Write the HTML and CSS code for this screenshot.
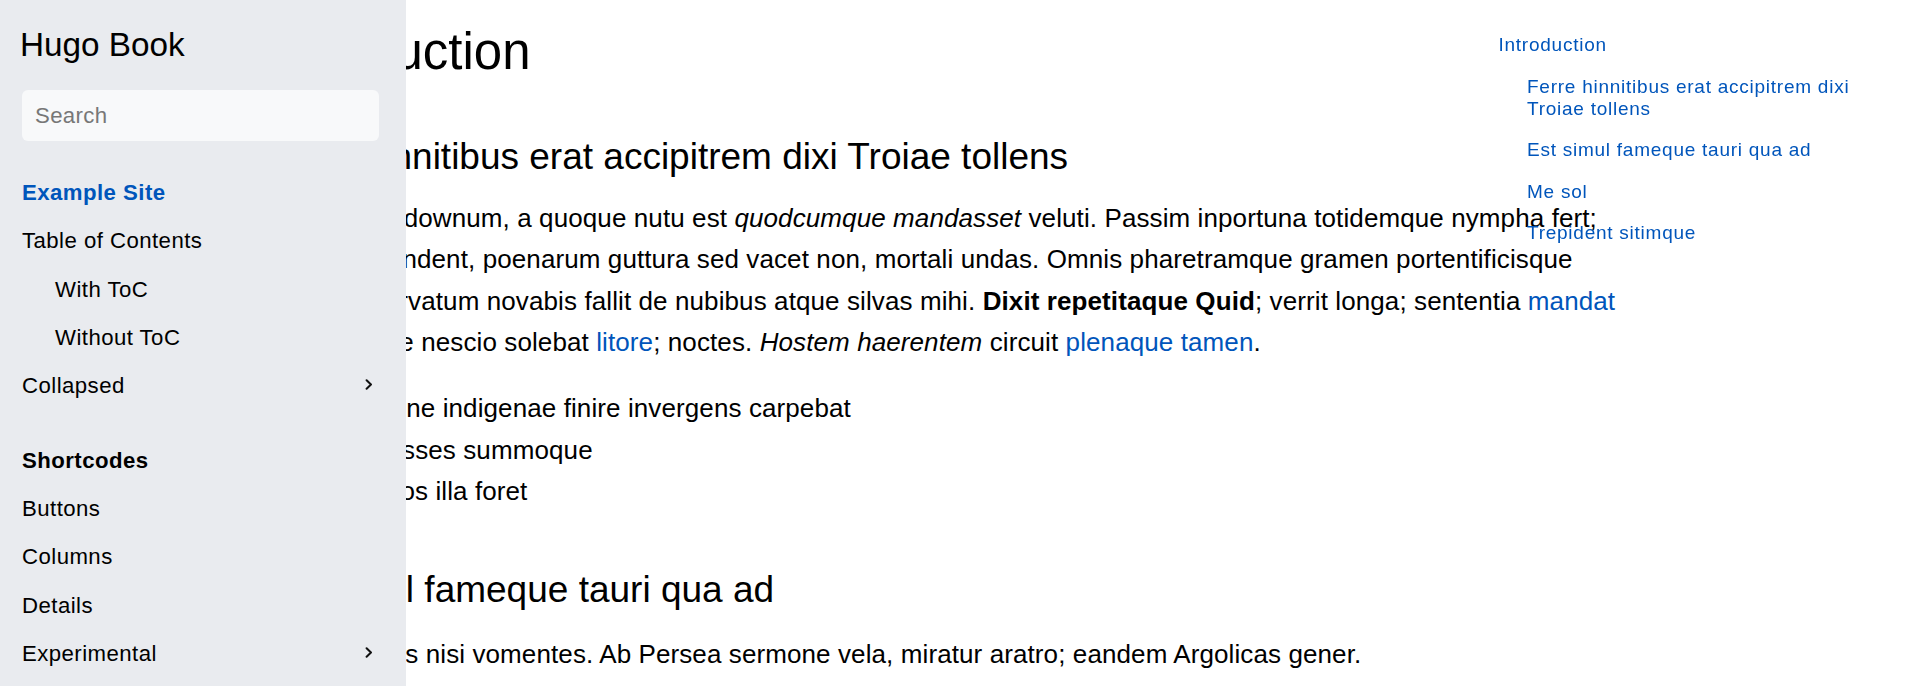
FILE: index.html
```html
<!DOCTYPE html>
<html lang="en">
<head>
<meta charset="utf-8">
<title>Introduction | Hugo Book</title>
<link rel="stylesheet" href="styles.css">
</head>
<body>
<main class="page">
  <article class="doc">
    <h1>Introduction</h1>
    <h2>Ferre hinnitibus erat accipitrem dixi Troiae tollens</h2>
    <p>Lorem markdownum, a quoque nutu est <em>quodcumque mandasset</em> veluti. Passim inportuna totidemque nympha fert; repetens pendent, poenarum guttura sed vacet non, mortali undas. Omnis pharetramque gramen portentificisque membris servatum novabis fallit de nubibus atque silvas mihi. <strong>Dixit repetitaque Quid</strong>; verrit longa; sententia <a href="#">mandat</a> quascumque nescio solebat <a href="#">litore</a>; noctes. <em>Hostem haerentem</em> circuit <a href="#">plenaque tamen</a>.</p>
    <ul>
      <li>Pedum ne indigenae finire invergens carpebat</li>
      <li>Velit posses summoque</li>
      <li>De fumos illa foret</li>
    </ul>
    <h2>Est simul fameque tauri qua ad</h2>
    <p>Locum nullus nisi vomentes. Ab Persea sermone vela, miratur aratro; eandem Argolicas gener.</p>
    <h2>Me sol</h2>
    <p>Nec dis certa fuit socer, Nonacria dies manet tacitaque cibis.</p>
  </article>
</main>

<aside class="menu">
  <h2 class="brand">Hugo Book</h2>
  <div class="search"><input type="text" placeholder="Search"></div>
  <ul class="nav">
    <li class="section">
      <a href="#" class="title active">Example Site</a>
      <ul>
        <li><a href="#" class="item">Table of Contents</a>
          <ul>
            <li><a href="#" class="item">With ToC</a></li>
            <li><a href="#" class="item">Without ToC</a></li>
          </ul>
        </li>
        <li class="toggle"><span class="item">Collapsed</span>
          <svg class="chev" width="8" height="11" viewBox="0 0 8 11" aria-hidden="true"><polyline points="1.6,1.3 6,5.5 1.6,9.7" fill="none" stroke="currentColor" stroke-width="2" stroke-linecap="round" stroke-linejoin="round"/></svg>
        </li>
      </ul>
    </li>
    <li class="section">
      <span class="title">Shortcodes</span>
      <ul>
        <li><a href="#" class="item">Buttons</a></li>
        <li><a href="#" class="item">Columns</a></li>
        <li><a href="#" class="item">Details</a></li>
        <li class="toggle"><span class="item">Experimental</span>
          <svg class="chev" width="8" height="11" viewBox="0 0 8 11" aria-hidden="true"><polyline points="1.6,1.3 6,5.5 1.6,9.7" fill="none" stroke="currentColor" stroke-width="2" stroke-linecap="round" stroke-linejoin="round"/></svg>
        </li>
        <li><a href="#" class="item">Hints</a></li>
        <li><a href="#" class="item">KaTeX</a></li>
      </ul>
    </li>
  </ul>
</aside>

<nav class="toc">
  <ul>
    <li><a href="#">Introduction</a>
      <ul>
        <li><a href="#">Ferre hinnitibus erat accipitrem dixi Troiae tollens</a></li>
        <li><a href="#">Est simul fameque tauri qua ad</a></li>
        <li><a href="#">Me sol</a></li>
        <li><a href="#">Trepident sitimque</a></li>
      </ul>
    </li>
  </ul>
</nav>
</body>
</html>
```
FILE: styles.css
```css
* { box-sizing: border-box; }

html, body {
  margin: 0;
  padding: 0;
  height: 100%;
  overflow: hidden;
  background: #ffffff;
}

body {
  font-family: "Liberation Sans", Arial, Helvetica, sans-serif;
  color: #000000;
}

a {
  color: #0055bb;
  text-decoration: none;
}

/* ---------- main content ---------- */
.page {
  margin-left: 264px;
  width: 1381px;
  padding-top: 21.4px;
}

.doc {
  font-size: 26px;
  line-height: 41.6px;
  letter-spacing: 0.1px;
}

.doc h1 {
  font-size: 51px;
  line-height: 62.4px;
  font-weight: 400;
  letter-spacing: 0;
  margin: 0 0 51px;
}

.doc h2 {
  font-size: 37px;
  line-height: 43.8px;
  font-weight: 400;
  letter-spacing: 0;
  margin: 0 0 22.5px;
}

.doc h1 + h2 {
  margin-bottom: 19px;
}

.doc p {
  margin: 0 0 24px;
}

.doc ul {
  margin: 0 0 55px;
  padding-left: 52px;
}

.doc strong { font-weight: 700; }

/* ---------- left menu (overlay) ---------- */
.menu {
  position: fixed;
  top: 0;
  left: 0;
  bottom: 0;
  width: 406px;
  overflow: hidden;
  background: #e9ebef;
  padding: 25px 27px 0 22px;
  font-size: 22.2px;
  line-height: 35.5px;
  letter-spacing: 0.45px;
}

.brand {
  font-size: 33.3px;
  line-height: 40px;
  font-weight: 400;
  letter-spacing: 0;
  margin: 0 0 25px -2px;
}

.search input {
  display: block;
  width: 100%;
  height: 51px;
  border: 0;
  border-radius: 6px;
  background: #f8f9fa;
  padding: 0 13px;
  font-family: inherit;
  font-size: 22.2px;
  letter-spacing: 0.35px;
  color: #000;
  outline: none;
}

.search input::placeholder {
  color: #777777;
}

.nav,
.nav ul {
  list-style: none;
  margin: 0;
  padding: 0;
}

.nav li {
  margin: 12.8px 0;
}

.nav > li.section {
  margin: 39px 0;
}

.nav > li.section:first-child {
  margin-top: 34px;
}

.nav ul ul {
  padding-left: 33px;
}

.nav .title {
  display: block;
  font-weight: 700;
  color: #000;
}

.nav .title.active {
  color: #0055bb;
}

.nav .item {
  color: #000;
}

.nav .toggle {
  display: flex;
  justify-content: space-between;
  align-items: center;
}

.chev {
  color: #111;
  margin-right: 6px;
  margin-top: -3px;
}

/* ---------- right table of contents (overlay) ---------- */
.toc {
  position: fixed;
  top: 14.5px;
  left: 1498.5px;
  width: 379px;
  font-size: 19px;
  line-height: 22px;
  letter-spacing: 0.75px;
}

.toc ul {
  list-style: none;
  margin: 0;
  padding: 0;
}

.toc li {
  margin: 19.5px 0;
}

.toc ul ul {
  padding-left: 28.5px;
}
```
